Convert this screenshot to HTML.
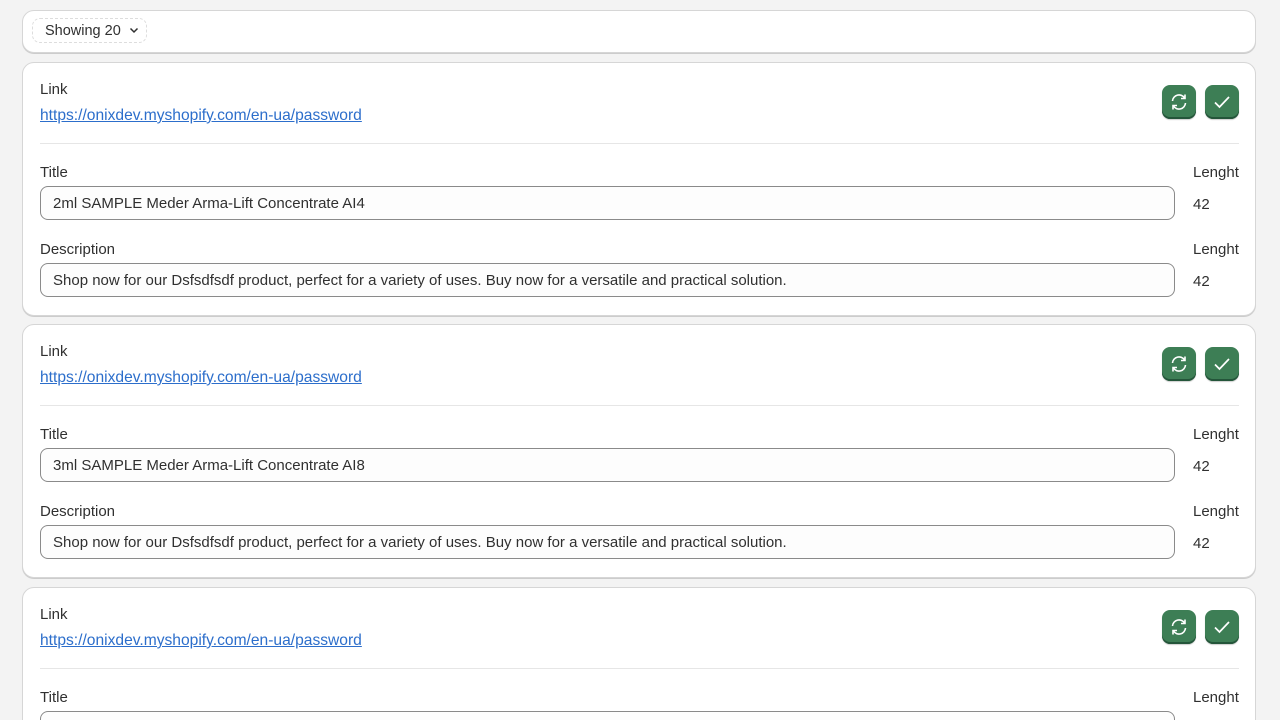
<!DOCTYPE html>
<html style="overflow:hidden;height:720px"><head><style>
body{margin:0;background:#f3f3f3;font-family:"Liberation Sans",sans-serif;font-size:15px;color:#303030;width:1280px;height:720px;overflow:hidden;position:relative}
.box{position:absolute;left:22px;width:1232px;background:#fff;border:1px solid #d6d6d6;border-radius:12px;box-shadow:0 1px 0 #ccc}
.top{top:10px;height:41px}
.sel{position:absolute;left:9px;top:7px;width:115px;height:25px;border:1px dashed #ddd;border-radius:8px;line-height:25px;padding-left:12px;box-sizing:border-box;font-size:14.5px}
.card{height:252px}
.a{position:absolute;white-space:nowrap;line-height:18px}
.lnk{color:#2c6ecb;text-decoration:underline;font-size:15.6px}
.hr{position:absolute;left:17px;right:16px;top:80px;height:1px;background:#e6e6e6}
.inp{position:absolute;left:17px;width:1135px;height:34px;border:1px solid #8a8a8a;border-radius:8px;line-height:34px;padding-left:12px;box-sizing:border-box;background:#fdfdfd}
.btn{position:absolute;top:22px;width:34px;height:34px;background:#3d7e55;border-radius:8px;box-shadow:inset 0 -2px 0 #24553a,0 1px 1px rgba(0,0,0,.2)}
.btn svg{position:absolute;left:7px;top:7px}
</style></head><body>
<div class="box top"><div class="sel">Showing 20 <svg width="12" height="12" viewBox="0 0 12 12" style="vertical-align:-1px;margin-left:3px"><path d="M2.5 4.5L6 8l3.5-3.5" fill="none" stroke="#303030" stroke-width="1.5"/></svg></div></div>

<div class="box card" style="top:62px">
<div class="a" style="left:17px;top:18px">Link</div>
<div class="a lnk" style="left:17px;top:44px">https://onixdev.myshopify.com/en-ua/password</div>
<div class="btn" style="left:1139px"><svg width="20" height="20" viewBox="0 0 20 20" fill="none" stroke="#fff" stroke-width="1.6"><path d="M3.5 9a6.5 6.5 0 0 1 12-3"/><path d="M16.5 11a6.5 6.5 0 0 1-12 3"/><path d="M16 2.5v4h-4M4 17.5v-4h4"/></svg></div>
<div class="btn" style="left:1182px"><svg width="20" height="20" viewBox="0 0 20 20" fill="none" stroke="#fff" stroke-width="1.7"><path d="M3 10.5l4.5 4.5L17 5"/></svg></div>
<div class="hr"></div>
<div class="a" style="left:17px;top:101px">Title</div><div class="a" style="left:1170px;top:101px">Lenght</div>
<div class="inp" style="top:123px">2ml SAMPLE Meder Arma-Lift Concentrate AI4</div><div class="a" style="left:1170px;top:133px">42</div>
<div class="a" style="left:17px;top:178px">Description</div><div class="a" style="left:1170px;top:178px">Lenght</div>
<div class="inp" style="top:200px">Shop now for our Dsfsdfsdf product, perfect for a variety of uses. Buy now for a versatile and practical solution.</div><div class="a" style="left:1170px;top:210px">42</div>
</div>

<div class="box card" style="top:324px">
<div class="a" style="left:17px;top:18px">Link</div>
<div class="a lnk" style="left:17px;top:44px">https://onixdev.myshopify.com/en-ua/password</div>
<div class="btn" style="left:1139px"><svg width="20" height="20" viewBox="0 0 20 20" fill="none" stroke="#fff" stroke-width="1.6"><path d="M3.5 9a6.5 6.5 0 0 1 12-3"/><path d="M16.5 11a6.5 6.5 0 0 1-12 3"/><path d="M16 2.5v4h-4M4 17.5v-4h4"/></svg></div>
<div class="btn" style="left:1182px"><svg width="20" height="20" viewBox="0 0 20 20" fill="none" stroke="#fff" stroke-width="1.7"><path d="M3 10.5l4.5 4.5L17 5"/></svg></div>
<div class="hr"></div>
<div class="a" style="left:17px;top:101px">Title</div><div class="a" style="left:1170px;top:101px">Lenght</div>
<div class="inp" style="top:123px">3ml SAMPLE Meder Arma-Lift Concentrate AI8</div><div class="a" style="left:1170px;top:133px">42</div>
<div class="a" style="left:17px;top:178px">Description</div><div class="a" style="left:1170px;top:178px">Lenght</div>
<div class="inp" style="top:200px">Shop now for our Dsfsdfsdf product, perfect for a variety of uses. Buy now for a versatile and practical solution.</div><div class="a" style="left:1170px;top:210px">42</div>
</div>

<div class="box card" style="top:587px">
<div class="a" style="left:17px;top:18px">Link</div>
<div class="a lnk" style="left:17px;top:44px">https://onixdev.myshopify.com/en-ua/password</div>
<div class="btn" style="left:1139px"><svg width="20" height="20" viewBox="0 0 20 20" fill="none" stroke="#fff" stroke-width="1.6"><path d="M3.5 9a6.5 6.5 0 0 1 12-3"/><path d="M16.5 11a6.5 6.5 0 0 1-12 3"/><path d="M16 2.5v4h-4M4 17.5v-4h4"/></svg></div>
<div class="btn" style="left:1182px"><svg width="20" height="20" viewBox="0 0 20 20" fill="none" stroke="#fff" stroke-width="1.7"><path d="M3 10.5l4.5 4.5L17 5"/></svg></div>
<div class="hr"></div>
<div class="a" style="left:17px;top:101px">Title</div><div class="a" style="left:1170px;top:101px">Lenght</div>
<div class="inp" style="top:123px"></div>
</div>
</body></html>
